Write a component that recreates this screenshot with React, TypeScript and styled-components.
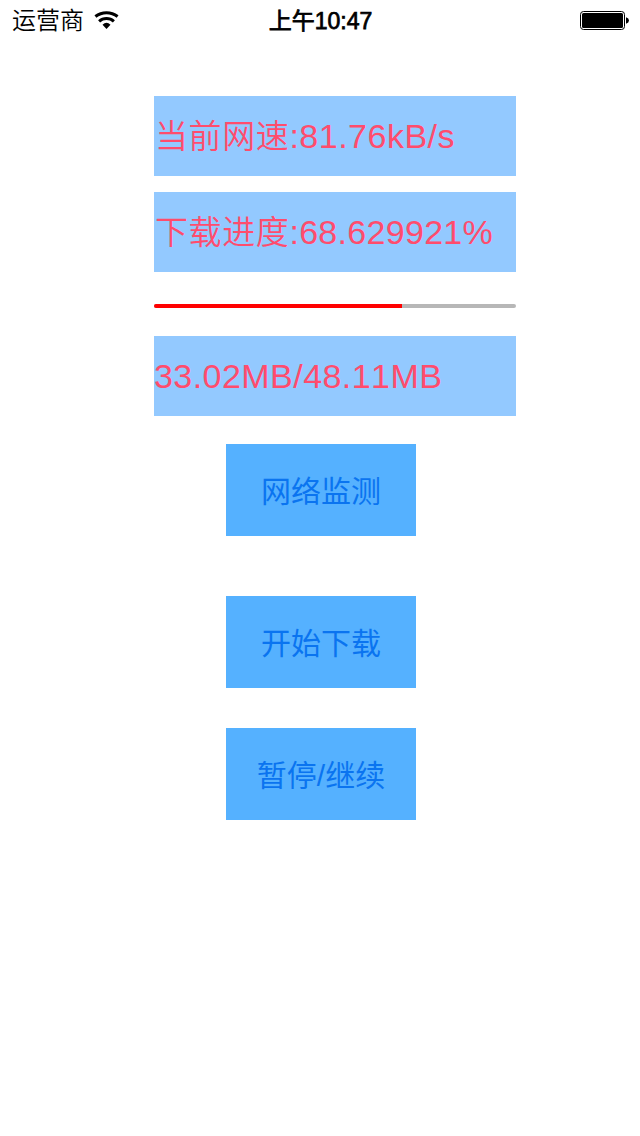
import React from 'react';
import styled, { createGlobalStyle } from 'styled-components';

const Global = createGlobalStyle`
  body { margin: 0; background: #fff; }
  * { box-sizing: border-box; }
`;
const sans = `"Liberation Sans", "Noto Sans CJK SC", sans-serif`;
const Screen = styled.main`
  width: 640px; height: 1136px; background: #fff; font-family: ${sans}; font-kerning: none;
  display: flex; flex-direction: column; overflow: hidden;
`;
const StatusBar = styled.header`
  height: 40px; display: grid; grid-template-columns: 1fr auto 1fr; align-items: center;
  padding: 0 11px 0 12px; color: #000; font-size: 24px; line-height: 40px; white-space: nowrap;
`;
const Carrier = styled.div`display: flex; align-items: center; gap: 10px; font-weight: 350;`;
const CarrierName = styled.span`padding-top: 2px; line-height: 38px;`;
const Time = styled.div`
  font-weight: 400; font-size: 23px; padding-top: 2px; line-height: 38px;
  -webkit-text-stroke: 0.75px #000;
`;
const Battery = styled.div`display: flex; justify-content: flex-end;`;
const Readouts = styled.section`
  width: 362px; margin: 56px 0 0 154px; display: flex; flex-direction: column;
`;
const Readout = styled.div<{ $gap?: number; $tracking?: number }>`
  height: 80px; margin-bottom: ${p => p.$gap ?? 0}px; background: #93c9ff; color: #ff4c6d;
  font-size: 34px; line-height: 80px; white-space: nowrap; font-weight: 400;
  letter-spacing: ${p => p.$tracking ?? 0}px;
`;
const Label = styled.span`
  font-size: 33px; font-weight: 350; letter-spacing: 0.6px; padding-left: 1px;
`;
const Track = styled.div`
  height: 4px; margin-bottom: 28px; border-radius: 2px; background: #b7b7b7; overflow: hidden;
`;
const Fill = styled.div`height: 4px; background: #f00;`;
const Actions = styled.section`
  width: 190px; margin: 28px 0 0 226px; display: flex; flex-direction: column;
`;
const Action = styled.button<{ $gap?: number }>`
  height: 92px; margin: 0 0 ${p => p.$gap ?? 0}px; padding: 0 0 2px; border: 0; background: #55b1ff;
  color: #0a74f0; font: 400 30px ${sans}; white-space: nowrap;
`;

export default function App() {
  return (
    <Screen>
      <Global />
      <StatusBar>
        <Carrier>
          <CarrierName>运营商</CarrierName>
          <svg width="25" height="20" viewBox="0 0 25 20" fill="none" stroke="#000" strokeWidth="3">
            <path d="M1.4 6.5A17.9 17.9 0 0 1 23.6 6.5" />
            <path d="M5.1 11.4A11.1 11.1 0 0 1 19.9 11.4" />
            <path d="M12.5 19L8.5 14.8Q12.5 10.6 16.5 14.8Z" fill="#000" stroke="none" />
          </svg>
        </Carrier>
        <Time>上午10:47</Time>
        <Battery>
          <svg width="49" height="20" viewBox="0 0 49 20">
            <rect x=".5" y="1.5" width="44" height="18" rx="3" fill="none" stroke="#000" />
            <rect x="2" y="3" width="41" height="15" rx="1.5" />
            <path d="M46 7.2q3 1 3 3.3t-3 3.3z" />
          </svg>
        </Battery>
      </StatusBar>
      <Readouts>
        <Readout $gap={16} $tracking={0.5}><Label>当前网速</Label>:81.76kB/s</Readout>
        <Readout $gap={32} $tracking={0.3}><Label>下载进度</Label>:68.629921%</Readout>
        <Track><Fill style={{ width: '68.63%' }} /></Track>
        <Readout $tracking={0.45}>33.02MB/48.11MB</Readout>
      </Readouts>
      <Actions>
        <Action $gap={60}>网络监测</Action>
        <Action $gap={40}>开始下载</Action>
        <Action>暂停/继续</Action>
      </Actions>
    </Screen>
  );
}
